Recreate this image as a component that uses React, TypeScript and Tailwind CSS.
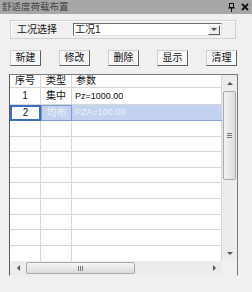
import React from "react";

const ROW_HEIGHTS = [
  "h-[17px]",
  "h-[16px]",
  "h-[16px]",
  "h-[15px]",
  "h-[16px]",
  "h-[15px]",
  "h-[16px]",
  "h-[16px]",
  "h-[15px]",
  "h-[16px]",
  "h-[15px]",
];

const ROWS = [
  { no: "1", type: "集中", param: "Pz=1000.00" },
  { no: "2", type: "均布", param: "PZA=100.00" },
];

const BUTTONS = ["新建", "修改", "删除", "显示", "清理"];

const FONT = "font-['Liberation_Sans','Noto_Sans_CJK_SC',sans-serif]";

function PinIcon() {
  return (
    <svg width="7" height="9" viewBox="0 0 7 9">
      <rect x="1.5" y="0.5" width="4" height="4" fill="none" stroke="#111" />
      <line x1="0" y1="5" x2="7" y2="5" stroke="#111" />
      <line x1="3.5" y1="5" x2="3.5" y2="9" stroke="#111" />
    </svg>
  );
}

function CloseIcon() {
  return (
    <svg width="8" height="8" viewBox="0 0 8 8">
      <path d="M1 1 L7 7 M7 1 L1 7" stroke="#111" strokeWidth="1.8" />
    </svg>
  );
}

function Arrow({ dir }: { dir: "up" | "down" | "left" | "right" }) {
  const paths = {
    up: "M0 3 L3 0 L6 3 Z",
    down: "M0 0 L6 0 L3 3 Z",
    left: "M3 0 L3 6 L0 3 Z",
    right: "M0 0 L3 3 L0 6 Z",
  };
  const vertical = dir === "up" || dir === "down";
  return (
    <svg
      width={vertical ? 6 : 3}
      height={vertical ? 3 : 6}
      viewBox={vertical ? "0 0 6 3" : "0 0 3 6"}
    >
      <path d={paths[dir]} fill="#555" />
    </svg>
  );
}

function Cell({
  className,
  children,
}: {
  className?: string;
  children?: React.ReactNode;
}) {
  return (
    <div
      className={`flex items-center border-r border-[#d6d6d6] ${className ?? ""}`}
    >
      {children}
    </div>
  );
}

export default function App() {
  return (
    <div
      className={`flex h-[292px] w-[252px] flex-col bg-[#f0f0f0] ${FONT} text-[#111]`}
    >
      {/* title bar */}
      <div className="flex h-[14px] items-center bg-[#a7a7a7] pl-[2px] pr-[3px]">
        <span className="text-[9.5px] leading-none text-[#3f3f3f]">
          舒适度荷载布置
        </span>
        <div className="ml-auto flex items-center gap-[6px]">
          <PinIcon />
          <CloseIcon />
        </div>
      </div>

      {/* case selection group */}
      <div className="ml-[10px] mt-[6px] flex h-[19px] w-[226px] items-center border border-[#d0d0d0] pl-[6px] shadow-[inset_1px_1px_0_#fff]">
        <span className="w-[56px] text-[10px] leading-none">工况选择</span>
        <div className="flex h-[13px] w-[149px] items-center border border-t-[#6e6e6e] border-l-[#6e6e6e] border-r-[#e3e3e3] border-b-[#e3e3e3] bg-white pl-[1px]">
          <span className="text-[10px] leading-none">工况1</span>
          <div className="ml-auto mr-[1px] flex h-[10px] w-[12px] items-center justify-center border border-t-[#fafafa] border-l-[#fafafa] border-r-[#5a5a5a] border-b-[#5a5a5a] bg-[#ececec]">
            <Arrow dir="down" />
          </div>
        </div>
      </div>

      {/* buttons */}
      <div className="ml-[10px] mt-[11px] flex w-[227px] justify-between">
        {BUTTONS.map((label) => (
          <button
            key={label}
            type="button"
            className="flex h-[16px] w-[31px] items-center justify-center border border-t-[#cfcfcf] border-l-[#cfcfcf] border-r-[#5f5f5f] border-b-[#5f5f5f] bg-[#f7f7f7] text-[10px] leading-none"
          >
            {label}
          </button>
        ))}
      </div>

      {/* table */}
      <div className="ml-[9px] mt-[8px] flex h-[202px] w-[229px] flex-col border border-[#7a7a7a] border-b-[#f0f0f0] border-l-[#5c5c5c]">
        <div className="flex h-[186px]">
          <div className="flex w-[212px] flex-col bg-white">
            <div className="flex h-[13px] border-b border-[#d6d6d6] text-[10px] leading-none">
              <Cell className="w-[31px] justify-center">序号</Cell>
              <Cell className="w-[31px] justify-center">类型</Cell>
              <Cell className="flex-1 pl-[4px]">参数</Cell>
            </div>
            {ROW_HEIGHTS.map((h, i) => {
              const row = ROWS[i];
              const selected = i === 1;
              const last = i === ROW_HEIGHTS.length - 1;
              if (selected && row) {
                return (
                  <div key={i} className={`flex ${h} text-[10px] leading-none`}>
                    <div className="flex w-[31px] items-center justify-center border-2 border-[#3d6ec6] bg-white">
                      {row.no}
                    </div>
                    <div className="flex w-[31px] items-center justify-center border border-[#7b9ad6] bg-[#c3d2ef] text-[#edf1f9]">
                      {row.type}
                    </div>
                    <div className="flex flex-1 items-center border-b border-[#8aa5d9] bg-[#c3d2ef] pl-[3px] text-[9px] text-[#edf1f9]">
                      {row.param}
                    </div>
                  </div>
                );
              }
              return (
                <div
                  key={i}
                  className={`flex ${h} text-[10px] leading-none ${last ? "" : "border-b border-[#d6d6d6]"}`}
                >
                  <Cell className="w-[31px] justify-center">{row?.no}</Cell>
                  <Cell className="w-[31px] justify-center">{row?.type}</Cell>
                  <Cell className="flex-1 pl-[3px] text-[9px]">{row?.param}</Cell>
                </div>
              );
            })}
          </div>

          {/* vertical scrollbar */}
          <div className="flex w-[15px] flex-col items-center bg-[#ececec]">
            <div className="flex h-[16px] items-center justify-center">
              <Arrow dir="up" />
            </div>
            <div className="flex h-[89px] w-[13px] items-center justify-center rounded-[2px] border border-[#a9a9a9] bg-gradient-to-r from-[#f4f4f4] to-[#dcdcdc]">
              <div className="flex flex-col gap-[1px]">
                <div className="h-[1px] w-[5px] bg-[#777]" />
                <div className="h-[1px] w-[5px] bg-[#777]" />
                <div className="h-[1px] w-[5px] bg-[#777]" />
              </div>
            </div>
            <div className="mt-auto flex h-[16px] items-center justify-center">
              <Arrow dir="down" />
            </div>
          </div>
        </div>

        {/* horizontal scrollbar */}
        <div className="flex h-[14px]">
          <div className="flex w-[212px] items-center bg-[#ececec]">
            <div className="flex w-[16px] justify-center">
              <Arrow dir="left" />
            </div>
            <div className="flex h-[12px] w-[109px] items-center justify-center rounded-[2px] border border-[#a9a9a9] bg-gradient-to-b from-[#f4f4f4] to-[#dcdcdc]">
              <div className="flex gap-[1px]">
                <div className="h-[5px] w-[1px] bg-[#777]" />
                <div className="h-[5px] w-[1px] bg-[#777]" />
                <div className="h-[5px] w-[1px] bg-[#777]" />
              </div>
            </div>
            <div className="ml-auto flex w-[16px] justify-center">
              <Arrow dir="right" />
            </div>
          </div>
          <div className="w-[15px] bg-[#f0f0f0]" />
        </div>
      </div>
    </div>
  );
}
